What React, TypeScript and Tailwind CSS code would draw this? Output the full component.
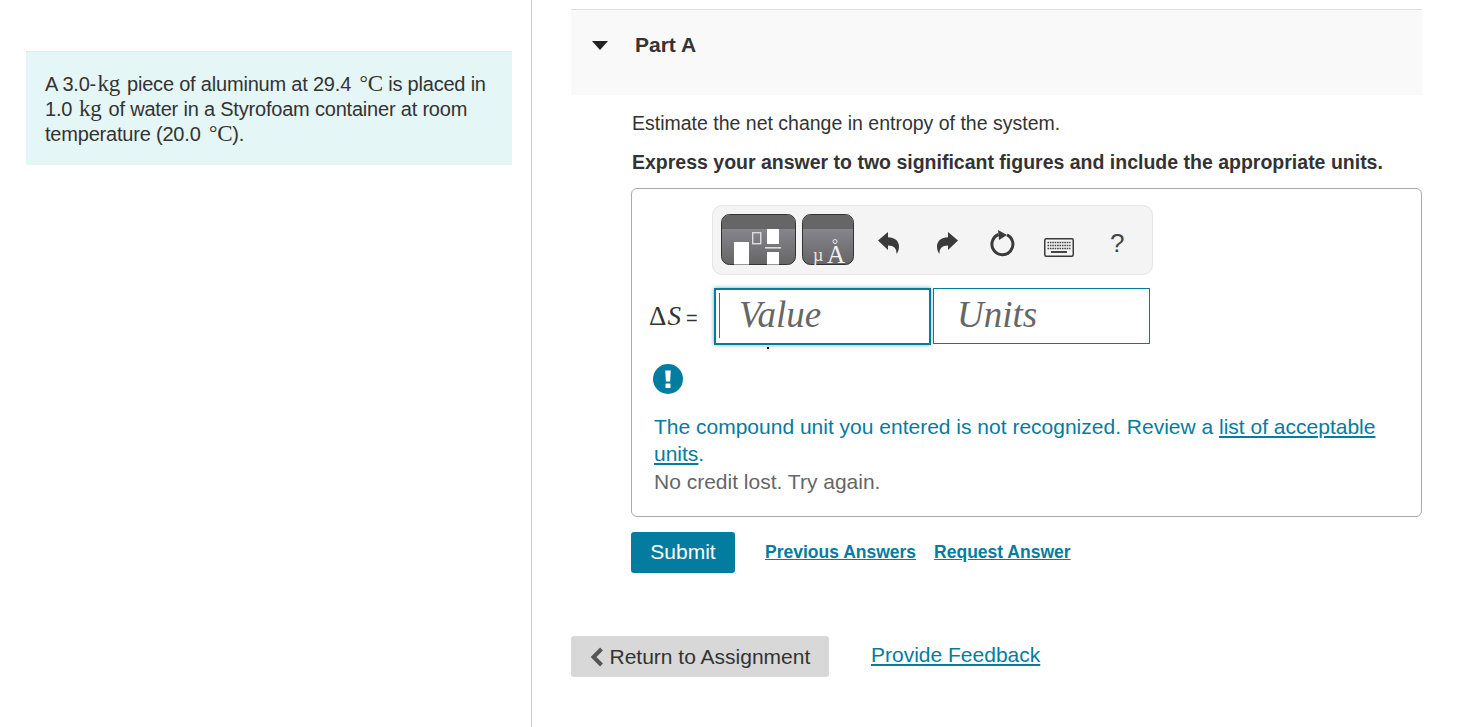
const font = "font-['Liberation_Sans',Arial,sans-serif]";

const Serif = ({ children }: { children: React.ReactNode }) => (
  <span className="mx-[1.5px] font-['Liberation_Serif',serif] text-[23px] leading-none">{children}</span>
);

const Degree = () => (
  <span className="ml-[3px] font-['Liberation_Serif',serif] text-[23px] leading-none">
    <span className="relative top-[-1px] text-[21px]">°</span>C
  </span>
);

const TemplateIcon = () => (
  <svg width="75" height="51" viewBox="0 0 75 51" className="mb-[1px] block">
    <defs>
      <linearGradient id="tplBg" x1="0" y1="0" x2="0" y2="1">
        <stop offset="0" stopColor="#94929d" />
        <stop offset="1" stopColor="#656565" />
      </linearGradient>
    </defs>
    <rect x="0.5" y="0.5" width="74" height="50" rx="8" fill="url(#tplBg)" stroke="#333" />
    <path d="M1 15V8.5A7.5 7.5 0 0 1 8.5 1h58A7.5 7.5 0 0 1 74 8.5V15z" fill="#666" />
    <rect x="13" y="28" width="15" height="22.5" fill="#fff" />
    <rect x="31.7" y="18.7" width="8" height="11" fill="none" stroke="#ddd" strokeWidth="1.4" />
    <rect x="46" y="15" width="12" height="15" fill="#fff" />
    <rect x="44" y="33" width="16" height="1.6" fill="#ddd" />
    <rect x="46" y="38" width="12" height="12.5" fill="#fff" />
  </svg>
);

const SymbolIcon = () => (
  <svg width="52" height="51" viewBox="0 0 52 51" className="mb-[1px] block">
    <defs>
      <linearGradient id="symBg" x1="0" y1="0" x2="0" y2="1">
        <stop offset="0" stopColor="#94929d" />
        <stop offset="1" stopColor="#656565" />
      </linearGradient>
    </defs>
    <rect x="0.5" y="0.5" width="51" height="50" rx="8" fill="url(#symBg)" stroke="#333" />
    <path d="M1 15V8.5A7.5 7.5 0 0 1 8.5 1h35A7.5 7.5 0 0 1 51 8.5V15z" fill="#666" />
    <text x="11" y="47" fontSize="18" fill="#e8e8e8" fontFamily="Liberation Serif, serif">µ</text>
    <text x="25" y="49" fontSize="25" fill="#f2f2f2" fontFamily="Liberation Serif, serif">A</text>
    <circle cx="33" cy="27.5" r="2" fill="none" stroke="#eee" strokeWidth="1" />
  </svg>
);

const UndoIcon = ({ flip }: { flip?: boolean }) => (
  <svg width="24" height="26" viewBox="0 0 24 26" className={flip ? "-scale-x-100" : ""}>
    <path
      d="M1 11.5 11 3v5.2c6.500 0 11 3.600 11 9.300 0 3-1 5.600-2.500 7.500.4-5.500-2.500-8.600-8.500-8.600V21z"
      fill="#3a3a3a"
    />
  </svg>
);

const ResetIcon = () => (
  <svg width="26" height="30" viewBox="0 0 26 30">
    <path d="M8.500 7.500A10.500 10.500 0 1 0 17 7.800" fill="none" stroke="#3a3a3a" strokeWidth="3" />
    <path d="M8 3l9 5-8 5z" fill="#3a3a3a" />
  </svg>
);

const KeyboardIcon = () => (
  <svg width="30" height="19" viewBox="0 0 30 19">
    <rect x="0.750" y="0.750" width="28.500" height="17.500" rx="1.500" fill="#f4f4f4" stroke="#3a3a3a" strokeWidth="1.500" />
    <path
      d="M3.500 4.500h23M3.500 7.500h23M3.500 10.500h23"
      stroke="#444"
      strokeWidth="1.600"
      strokeDasharray="1.600 0.800"
      fill="none"
    />
    <path d="M7 14h16" stroke="#444" strokeWidth="2" />
  </svg>
);

const AlertIcon = () => (
  <svg width="30" height="30" viewBox="0 0 30 30" className="block">
    <circle cx="15" cy="15" r="15" fill="#047c9f" />
    <path d="M12.200 6.500h5.600l-.7 11h-4.200z" fill="#fff" />
    <rect x="12.500" y="19.500" width="5" height="4.500" rx="0.500" fill="#fff" />
  </svg>
);

export default function App() {
  return (
    <div className={`${font} flex h-[727px] w-[1462px] overflow-hidden bg-white text-[20px] text-[#333]`}>
      {/* Left column with the problem text */}
      <aside className="w-[532px] shrink-0 border-r border-[#ccc] pl-[26px] pr-[19px] pt-[51px]">
        <div className="h-[114px] border-t border-[#dcecec] bg-[#e5f6f6] pl-[19px] pr-[20px] pt-[20px] leading-[25px] tracking-[-0.2px]">
          A 3.0-<Serif>kg</Serif> piece of aluminum at 29.4 <Degree /> is placed in
          <br />
          1.0 <Serif>kg</Serif> of water in a Styrofoam container at room
          <br />
          temperature (20.0 <Degree />).
        </div>
      </aside>

      <main className="ml-[39px] w-[851px] pt-[9px]">
        {/* Part header */}
        <div className="flex h-[86px] items-start border-t border-[#e0e0e0] bg-[#f9f9f9] pt-[22px]">
          <span className="ml-[21px] mt-[9px] h-0 w-0 border-x-[8px] border-t-[9px] border-x-transparent border-t-[#222]" />
          <span className="ml-[27px] text-[21px] font-bold leading-[26px] text-[#333]">Part A</span>
        </div>

        <div className="pl-[60px]">
          <p className="ml-px mt-[15px] text-[19.5px] leading-[26px]">Estimate the net change in entropy of the system.</p>
          <p className="ml-px mt-[13px] text-[19.5px] font-bold leading-[26px]">
            Express your answer to two significant figures and include the appropriate units.
          </p>

          {/* Answer box */}
          <div className="mt-[13px] h-[329px] rounded-[6px] border border-[#aaa] pl-[17px] pt-[16px]">
            <div className="ml-[63px] flex h-[70px] w-[441px] items-center rounded-[10px] border border-[#e5e5e5] bg-[#f4f4f4] pl-[8px]">
              <TemplateIcon />
              <span className="ml-[6px]">
                <SymbolIcon />
              </span>
              <span className="ml-[23px] mt-[4px]">
                <UndoIcon />
              </span>
              <span className="ml-[34px] mt-[4px]">
                <UndoIcon flip />
              </span>
              <span className="ml-[31px] mt-[3px]">
                <ResetIcon />
              </span>
              <span className="ml-[28px] mt-[15px]">
                <KeyboardIcon />
              </span>
              <span className="ml-[36px] mt-[5px] text-[26px] leading-none text-[#444]">?</span>
            </div>

            <div className="relative mt-[13px] flex items-start">
              <span className="mt-[15px] flex w-[65px] items-baseline font-['Liberation_Serif',serif] leading-[26px] text-[#333]">
                <span className="text-[27px]">Δ</span>
                <i className="ml-px text-[27px]">S</i>
                <span className={`${font} ml-[5px] text-[20px]`}>=</span>
              </span>
              <div className="relative h-[57px] w-[217px] border-2 border-[#047c9c] pl-[23px] font-['Liberation_Serif',serif] text-[37px] italic leading-[50px] text-[#666] shadow-[0_0_4px_#047c9c99]">
                Value
                <span className="absolute left-[3px] top-[3px] h-[45px] w-px bg-[#2563eb]" />
              </div>
              <div className="ml-[2px] h-[56px] w-[217px] border border-[#047c9c] pl-[23px] font-['Liberation_Serif',serif] text-[37px] italic leading-[51px] text-[#666]">
                Units
              </div>
              <span className="absolute left-[118px] top-[59px] h-[2px] w-[2px] bg-black" />
            </div>

            <div className="ml-[4px] mt-[19px]">
              <AlertIcon />
            </div>

            <div className="ml-[5px] mt-[18.750px] w-[740px] text-[21px] leading-[27.500px]">
              <p className="text-[#047c9f]">
                The compound unit you entered is not recognized. Review a{" "}
                <a className="underline">list of acceptable units</a>.
              </p>
              <p className="text-[#666]">No credit lost. Try again.</p>
            </div>
          </div>

          {/* Actions */}
          <div className="mt-[15px] flex items-center">
            <button className="h-[41px] w-[104px] rounded-[3px] bg-[#047c9f] pb-[2px] text-[21px] text-white">Submit</button>
            <a className="ml-[30px] text-[17.500px] font-bold text-[#047c9f] underline">Previous Answers</a>
            <a className="ml-[18px] text-[17.500px] font-bold text-[#047c9f] underline">Request Answer</a>
          </div>
        </div>

        {/* Footer */}
        <div className="mt-[63px] flex items-start">
          <button className="flex h-[41px] w-[258px] items-center rounded-[3px] bg-[#d8d8d8] pl-[19px] text-[21px] text-[#333]">
            <svg width="14" height="20" viewBox="0 0 14 20" className="mr-[5.500px]">
              <path d="M11.500 2 3.500 10l8 8" fill="none" stroke="#555" strokeWidth="4" />
            </svg>
            Return to Assignment
          </button>
          <a className="ml-[42px] mt-[6px] text-[21px] leading-[26px] text-[#047c9f] underline">Provide Feedback</a>
        </div>
      </main>
    </div>
  );
}
